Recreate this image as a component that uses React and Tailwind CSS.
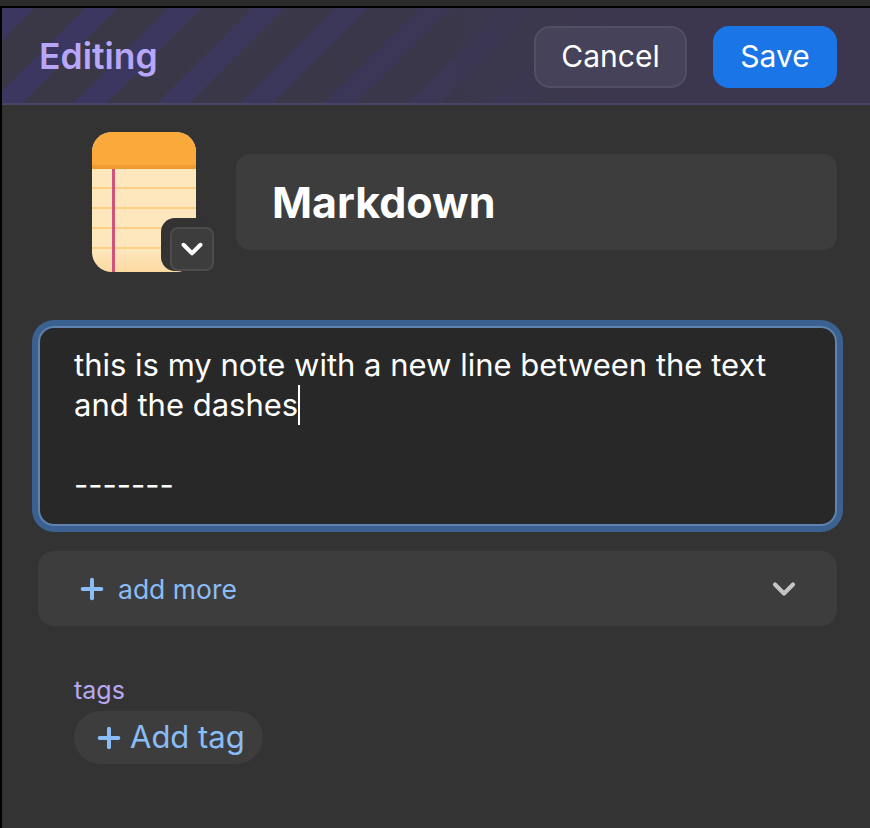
import { Plus, ChevronDown } from "lucide-react";

function NoteIcon() {
  return (
    <svg width="104" height="140" viewBox="0 0 104 140" className="block">
      <defs>
        <clipPath id="pad">
          <rect width="104" height="140" rx="20" />
        </clipPath>
        <linearGradient id="paper" x1="0" y1="0" x2="0" y2="1">
          <stop offset="0.85" stopColor="#fee6bd" />
          <stop offset="1" stopColor="#fcd9a0" />
        </linearGradient>
      </defs>
      <g clipPath="url(#pad)">
        <rect width="104" height="140" fill="url(#paper)" />
        <rect width="104" height="33" fill="#f9aa3b" />
        <rect y="33" width="104" height="4" fill="#f09b32" />
        <rect y="55" width="104" height="2" fill="#fdcf85" />
        <rect y="75" width="104" height="2" fill="#fdcf85" />
        <rect y="95" width="104" height="2" fill="#fdcf85" />
        <rect y="115" width="104" height="2" fill="#fdcf85" />
        <rect x="20" y="37" width="3" height="103" fill="#d1527a" />
      </g>
    </svg>
  );
}

export default function App() {
  return (
    <div className="h-[828px] w-[870px] overflow-hidden bg-[#2b2b2b] pt-[6px] font-['Inter',sans-serif] text-white">
      <div className="h-[822px] border-t-2 border-l-2 border-black bg-[#333333]">
        <div className="flex h-[97px] items-center justify-between border-b-2 border-[#4a4564] bg-[linear-gradient(90deg,#3c374e00_15%,#3c374e_70%),repeating-linear-gradient(135deg,#3b3760_0px,#3b3760_23px,#3a3847_23px,#3a3847_59px)] pt-[2px] pr-[33px] pl-[37px]">
          <span className="text-[35.5px] font-semibold text-[#b6a7fb]">Editing</span>
          <div className="flex items-center gap-[26px]">
            <button className="h-[62px] w-[153px] rounded-[16px] border-2 border-[#524f64] bg-[#46425a] text-[30px]">Cancel</button>
            <button className="h-[62px] w-[124px] rounded-[16px] bg-[#1a75e6] text-[30px]">Save</button>
          </div>
        </div>

        <div className="flex items-start pt-[27px] pr-[33px] pl-[90px]">
          <div className="relative h-[140px] w-[104px]">
            <NoteIcon />
            <div className="absolute top-[86px] left-[69px] rounded-[14px] bg-[#333333] pt-[9px] pl-[9px]">
              <div className="flex h-[44px] w-[44px] items-center justify-center rounded-[8px] border-2 border-[#4c4c4c] bg-[#3d3d3d]">
                <ChevronDown size={34} strokeWidth={2.8} />
              </div>
            </div>
          </div>
          <div className="mt-[22px] ml-[40px] flex h-[96px] flex-1 items-center rounded-[14px] bg-[#3d3d3d] pl-[36px] text-[43px] font-bold">
            Markdown
          </div>
        </div>

        <div className="pr-[33px] pl-[36px]">
          <div className="mt-[54px] h-[200px] rounded-[16px] border-2 border-[#5f83ae] bg-[#282828] px-[34px] pt-[17px] text-[31px] leading-[40px] shadow-[0_0_0_6px_#3a6190]">
            <div>this is my note with a new line between the text</div>
            <div className="flex">and the dashes<span className="inline-block h-[40px] w-[2px] bg-white" /></div>
            <div className="h-[40px]" />
            <div>-------</div>
          </div>

          <div className="mt-[25px] flex h-[75px] items-center justify-between rounded-[16px] bg-[#3d3d3d] pr-[35px] pl-[38px]">
            <div className="flex items-center gap-[10px] text-[26.5px] text-[#8abdf8]">
              <Plus size={32} strokeWidth={3} />
              <span className="mt-[2px]">add more</span>
            </div>
            <ChevronDown size={36} strokeWidth={2.8} className="text-[#c4c4c4]" />
          </div>

          <div className="mt-[46px] pl-[36px]">
            <div className="text-[25px] leading-[36px] text-[#b9a8f0]">tags</div>
            <div className="mt-[3px] flex h-[53px] w-[189px] items-center gap-[5px] rounded-full bg-[#3d3d3d] pl-[19px] text-[31px] text-[#8abdf8]">
              <Plus size={32} strokeWidth={3} />
              Add tag
            </div>
          </div>
        </div>
      </div>
    </div>
  );
}
